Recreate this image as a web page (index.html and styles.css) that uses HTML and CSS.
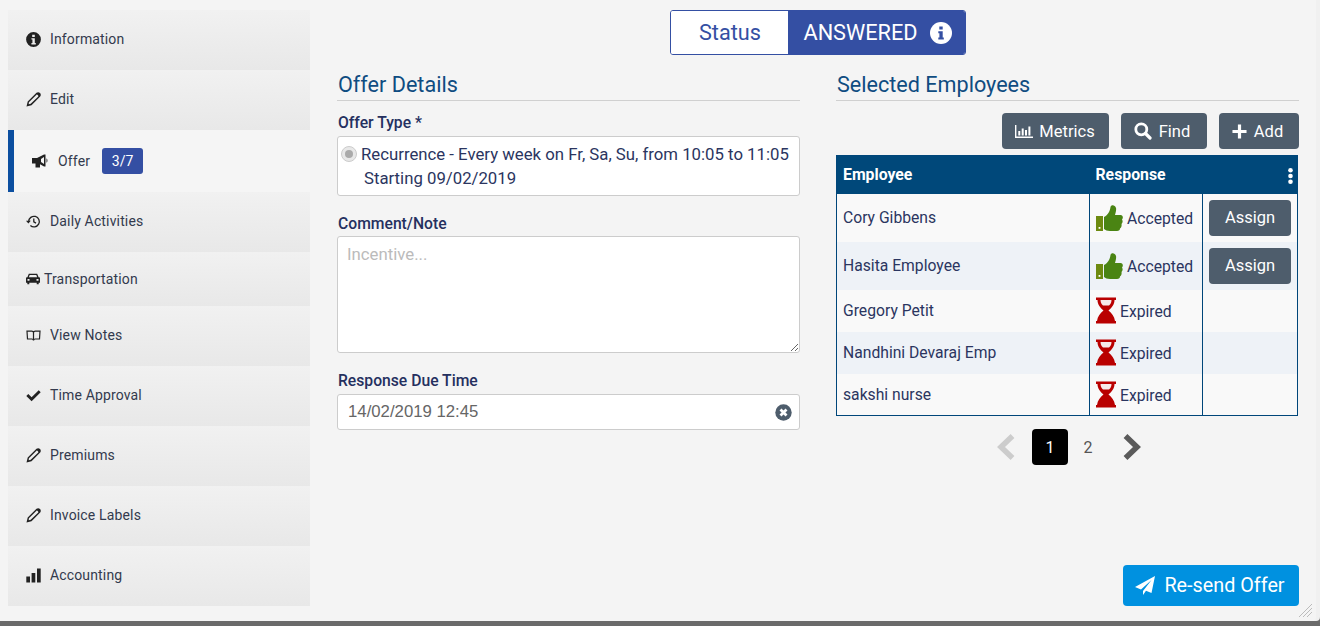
FILE: index.html
```html
<!DOCTYPE html>
<html lang="en">
<head>
<meta charset="utf-8">
<title>Offer</title>
<link rel="stylesheet" href="styles.css">
</head>
<body>
<div class="dialog">
  <svg width="0" height="0" class="defs">
    <defs>
      <symbol id="pencil" viewBox="0 0 15 15"><path fill-rule="evenodd" d="M10.500.8C11.500 0 13 0 14 1 15 2 15 3.500 14.200 4.500L5.500 13.300.5 14.500 1.700 9.500ZM10.500 2.700 2.900 10.300 2.700 12.200 4.700 11.800 12.300 4.400C12.700 3.800 11.200 2.200 10.500 2.700Z"/></symbol>
      <symbol id="thumb" viewBox="0 0 27 26"><rect x="0" y="11" width="7" height="15" fill="#6d8a10"/><rect x="2.600" y="22" width="1.800" height="1.800" fill="#fff"/><path d="M8 12C12 10 14 6 14.500 2 15-.5 19-.5 20 3 20.500 5 19.500 8 19 10H24.500C27 10 27.500 13 26 14.500 27 16 26.800 18 25.500 19 26 21 25 23 24 23.500 24 25 23 26 21 26H14C11 26 9.500 25 8 24Z" fill="#4a8413"/></symbol>
      <symbol id="hourglass" viewBox="0 0 20 26"><path d="M0 0H20V2.500H18.500C18.500 7 15.500 10.500 12.500 13 15.500 15.500 18.500 19 19 23.500H20V26H0V23.500H1C1.500 19 4.500 15.500 7.500 13 4.500 10.500 1.500 7 1.500 2.500H0Z" fill="#b90000"/><path d="M4.500 2.500H15.500C15.500 5 14.500 7 13 8H7C5.500 7 4.500 5 4.500 2.500Z" fill="#f6eaea"/></symbol>
    </defs>
  </svg>
  <nav class="side">
    <a class="item"><svg class="ic" viewBox="0 0 15 15"><path fill-rule="evenodd" d="M7.500.1a7.400 7.400 0 1 0 0 14.800 7.400 7.400 0 0 0 0-14.800ZM6.200 2.700h2.600v2.200H6.200ZM5.400 6.200h3.400v4.900h1v1.300H5.400v-1.300h1V7.500h-1Z"/></svg><span>Information</span></a>
    <a class="item"><svg class="ic"><use href="#pencil"/></svg><span>Edit</span></a>
    <a class="item active"><svg class="ic ic-mega" viewBox="0 0 16 14"><path fill-rule="evenodd" d="M0 4H5L12 .5H13.500V12.500H12L8 10.200V13.500H3.500V9.500H0ZM14.500 4.200C15.800 5 15.800 8 14.500 8.800Z M12 3 9 5V8L12 10Z"/></svg><span>Offer</span><b class="badge">3/7</b></a>
    <a class="item"><svg class="ic" viewBox="0 0 15 15"><path fill="none" stroke="#222" stroke-width="1.300" d="M2.700 7.500a5.300 5.300 0 1 1 1.700 4M7.800 4.500v3.300l2.200 1.300"/><path d="M0 6.800 4.800 6.800 2.400 9.500Z"/></svg><span>Daily Activities</span></a>
    <a class="item shorter"><svg class="ic ic-car" viewBox="0 0 14 12"><path fill-rule="evenodd" d="M2.800.7H11.200L12.600 4.300H13.500L14 5V9.800H12.700V11.300H10.700V9.800H3.300V11.300H1.300V9.800H0V5L.5 4.300H1.400ZM3.700 2 2.900 4.300H11.100L10.300 2ZM1.500 6V7.800H3.500V6ZM10.500 6V7.800H12.500V6Z"/></svg><span>Transportation</span></a>
    <a class="item"><svg class="ic" viewBox="0 0 15 15"><path fill="none" stroke="#222" stroke-width="1.200" d="M1 3.200H5.700C6.800 3.200 7.500 3.900 7.500 4.800V12.500C7.500 11.600 6.800 11 5.700 11H1.500ZM14 3.200H9.300C8.200 3.200 7.500 3.900 7.500 4.800V12.500C7.500 11.600 8.200 11 9.300 11H13.500Z"/></svg><span>View Notes</span></a>
    <a class="item"><svg class="ic" viewBox="0 0 15 15"><path d="M.3 8 2.300 6 5.600 9.300 12.700 2.300 14.700 4.300 5.600 13.300Z"/></svg><span>Time Approval</span></a>
    <a class="item"><svg class="ic"><use href="#pencil"/></svg><span>Premiums</span></a>
    <a class="item"><svg class="ic"><use href="#pencil"/></svg><span>Invoice Labels</span></a>
    <a class="item"><svg class="ic" viewBox="0 0 15 15"><path d="M.3 8.500H4V14.500H.3ZM5.600 5H9.300V14.500H5.600ZM11 .5H14.700V14.500H11Z"/></svg><span>Accounting</span></a>
  </nav>
  <main class="content">
    <div class="status-row">
      <div class="status">
        <span class="status-l">Status</span>
        <span class="status-r">ANSWERED<svg class="status-i" viewBox="0 0 22 22"><circle cx="11" cy="11" r="11" fill="#fff"/><path fill="#344fa3" d="M9.300 4.500H12.700V7.500H9.300ZM8.300 9.300H12.700V15.500H13.800V17.500H8.300V15.500H9.400V11.300H8.300Z"/></svg></span>
      </div>
    </div>
    <div class="cols">
      <section class="col-left">
        <h2 class="title">Offer Details</h2>
        <label class="lbl lbl-first">Offer Type *</label>
        <div class="box radio-box">
          <div class="radio-line"><span class="radio"><i></i></span>Recurrence - Every week on Fr, Sa, Su, from 10:05 to 11:05</div>
          <div class="start">Starting 09/02/2019</div>
        </div>
        <label class="lbl lbl-c">Comment/Note</label>
        <textarea class="box area" placeholder="Incentive..."></textarea>
        <label class="lbl lbl-r">Response Due Time</label>
        <div class="box due"><span>14/02/2019 12:45</span><svg class="clear" viewBox="0 0 17 17"><circle cx="8.500" cy="8.500" r="8.200" fill="#4e5d6c"/><path stroke="#fff" stroke-width="2.800" d="M5.500 5.500 11.500 11.500M11.500 5.500 5.500 11.500"/></svg></div>
      </section>
      <section class="col-right">
        <h2 class="title">Selected Employees</h2>
        <div class="tools">
          <button class="btn btn-metrics"><svg class="b-ic" viewBox="0 0 18 15"><path fill="#fff" d="M0 1H1.400V12.600H18V14H0ZM3.300 7H5.300V11.500H3.300ZM6.700 4.500H8.700V11.500H6.700ZM10 6H12V11.500H10ZM13.400 2.500H15.400V11.500H13.400Z"/></svg>Metrics</button>
          <button class="btn btn-find"><svg class="b-ic s" viewBox="0 0 18 18"><circle cx="7.300" cy="7.300" r="5.500" fill="none" stroke="#fff" stroke-width="2.800"/><path stroke="#fff" stroke-width="3.200" stroke-linecap="round" d="M11.500 11.500 16 16"/></svg>Find</button>
          <button class="btn btn-add"><svg class="b-ic p" viewBox="0 0 16 16"><path stroke="#fff" stroke-width="3.400" d="M8 .5V15.500M.5 8H15.500"/></svg>Add</button>
        </div>
        <table class="grid">
          <thead>
            <tr><th class="c1">Employee</th><th class="c2">Response</th><th class="c3"><svg class="dots" viewBox="0 0 7 16"><circle cx="3.500" cy="2.300" r="2.300"/><circle cx="3.500" cy="8" r="2.300"/><circle cx="3.500" cy="13.700" r="2.300"/></svg></th></tr>
          </thead>
          <tbody>
            <tr class="tall"><td>Cory Gibbens</td><td><div class="resp"><svg class="thumb"><use href="#thumb"/></svg>Accepted</div></td><td class="act"><button class="btn assign">Assign</button></td></tr>
            <tr class="tall alt"><td>Hasita Employee</td><td><div class="resp"><svg class="thumb"><use href="#thumb"/></svg>Accepted</div></td><td class="act"><button class="btn assign">Assign</button></td></tr>
            <tr><td>Gregory Petit</td><td><div class="resp"><svg class="glass"><use href="#hourglass"/></svg>Expired</div></td><td></td></tr>
            <tr class="alt"><td>Nandhini Devaraj Emp</td><td><div class="resp"><svg class="glass"><use href="#hourglass"/></svg>Expired</div></td><td></td></tr>
            <tr><td>sakshi nurse</td><td><div class="resp"><svg class="glass"><use href="#hourglass"/></svg>Expired</div></td><td></td></tr>
          </tbody>
        </table>
        <div class="pager">
          <svg class="chev" viewBox="0 0 18 26"><path fill="none" stroke="#ccc" stroke-width="5.500" d="M15.500 2 4 13 15.500 24"/></svg>
          <span class="pg on">1</span>
          <span class="pg">2</span>
          <svg class="chev" viewBox="0 0 18 26"><path fill="none" stroke="#5a5a5a" stroke-width="5.500" d="M2.500 2 14 13 2.500 24"/></svg>
        </div>
      </section>
    </div>
    <div class="foot">
      <button class="send"><svg class="send-ic" viewBox="0 0 20 20"><path fill="#fff" d="M20 0 16.500 17 11 14.700 8 19V15L16.500 4 6 13.500 0 11Z"/></svg>Re-send Offer</button>
    </div>
  </main>
  <svg class="grip" viewBox="0 0 14 14"><path stroke="#bbb" stroke-width="1" d="M1 14 14 1M5 14 14 5M9 14 14 9"/></svg>
</div>
</body>
</html>
```

FILE: styles.css
```css
* { box-sizing: border-box; }
html, body { margin: 0; height: 100%; }
body {
  background: #6a6a6a;
  overflow: hidden;
  font-family: Roboto, "Liberation Sans", sans-serif;
  color: #2b2f52;
}
.defs { position: absolute; }
.dialog {
  position: relative;
  width: 1316px;
  height: 621px;
  background: #f4f4f4;
  display: flex;
  border-bottom-right-radius: 4px;
  box-shadow: 4px 0 0 #f0f0f0;
}
.side {
  width: 302px;
  margin: 10px 0 0 8px;
  flex: none;
  display: flex;
  flex-direction: column;
}
.item {
  height: 60px;
  display: flex;
  align-items: center;
  padding: 0 0 2px 18px;
  font-size: 14px;
  letter-spacing: .15px;
  color: #333a4d;
  background: linear-gradient(#f1f1f1, #e8e8e8);
}
.item > span { margin-left: 9px; }
.ic { width: 15px; height: 15px; flex: none; fill: #222; }
.item.shorter { height: 54px; padding-bottom: 0; }
.item.shorter > span { margin-left: 4px; }
.ic-car { width: 14px; height: 12px; }
.item.active {
  height: 62px;
  background: #f5f5f5;
  border-left: 6px solid #0c4fa0;
  padding-left: 18px;
  padding-bottom: 0;
}
.item.active > span { margin-left: 10px; }
.ic-mega { width: 16px; height: 14px; }
.badge {
  margin-left: 12px;
  width: 41px;
  height: 26px;
  border-radius: 3px;
  background: #344fa3;
  color: #fff;
  font-weight: 400;
  font-size: 14px;
  display: flex;
  align-items: center;
  justify-content: center;
}
.content {
  flex: 1;
  display: flex;
  flex-direction: column;
  padding: 10px 17px 15px 27px;
  min-width: 0;
}
.status-row { display: flex; justify-content: center; height: 45px; }
.status {
  display: flex;
  width: 296px;
  height: 45px;
  border: 1px solid #344fa3;
  border-radius: 3px;
  overflow: hidden;
  font-size: 21.700px;
  margin-left: -1px;
}
.status-l {
  width: 117px;
  background: #fff;
  color: #344fa3;
  display: flex;
  align-items: center;
  justify-content: center;
  padding-left: 2px;
}
.status-r {
  flex: 1;
  background: #344fa3;
  color: #fff;
  display: flex;
  align-items: center;
  padding-left: 16px;
}
.status-i { width: 22px; height: 22px; margin-left: 12px; }
.cols { display: flex; gap: 36px; flex: 1; margin-top: 16px; }
.col-left { width: 463px; display: flex; flex-direction: column; }
.col-right { width: 463px; display: flex; flex-direction: column; }
.title {
  margin: 0;
  height: 30px;
  font-size: 21.600px;
  line-height: 27px;
  font-weight: 400;
  color: #0f4c81;
  border-bottom: 1px solid #d0d0d0;
  padding-left: 1px;
}
.lbl { display: block; font-size: 15.700px; font-weight: 500; color: #25305f; line-height: 20px; padding-left: 1px; }
.lbl-first { margin-top: 12px; }
.lbl-c { margin-top: 18px; }
.lbl-r { margin-top: 18px; }
.box {
  display: block;
  width: 100%;
  background: #fff;
  border: 1px solid #ccc;
  border-radius: 3px;
}
.radio-box { margin-top: 3px; height: 60px; padding: 5px 0 0 3px; font-size: 16.750px; line-height: 24px; color: #2b3560; }
.radio-line { display: flex; align-items: center; white-space: nowrap; }
.radio {
  width: 16px;
  height: 16px;
  border-radius: 50%;
  background: #e8e8e8;
  border: 1px solid #ccc;
  display: flex;
  align-items: center;
  justify-content: center;
  margin-right: 4px;
  flex: none;
}
.radio i { width: 8px; height: 8px; border-radius: 50%; background: #aaa; }
.start { padding-left: 23px; }
.area {
  margin-top: 2px;
  height: 117px;
  padding: 6px 9px;
  resize: vertical;
  font: 16.750px/22px Roboto, sans-serif;
}
.area::placeholder { color: #bbb; opacity: 1; }
.due {
  margin-top: 3px;
  height: 36px;
  display: flex;
  align-items: center;
  justify-content: space-between;
  padding: 0 7px 1px 10px;
  font: 16.750px "Liberation Sans", sans-serif;
  color: #666;
}
.clear { width: 17px; height: 17px; margin-top: 1px; }
.tools { display: flex; justify-content: flex-end; gap: 12px; margin-top: 12px; height: 36px; }
.btn {
  display: inline-flex;
  align-items: center;
  justify-content: center;
  height: 36px;
  padding: 0;
  background: #4e5d6c;
  color: #fff;
  border: 0;
  border-radius: 4px;
  font: 16.500px Roboto, sans-serif;
}
.btn-metrics { width: 107px; padding-right: 1px; }
.btn-find { width: 86px; padding-right: 4px; }
.btn-add { width: 80px; padding-right: 3px; }
.b-ic { width: 18px; height: 15px; margin-right: 6px; }
.b-ic.s { width: 18px; height: 18px; margin-right: 7px; }
.b-ic.p { width: 15px; height: 15px; margin-right: 7px; }
.grid {
  margin-top: 6px;
  width: 462px;
  border-collapse: collapse;
  table-layout: fixed;
  font-size: 15.700px;
  background: #f9f9f9;
  border: 1px solid #00467a;
}
.grid th {
  background: #00487a;
  color: #fff;
  text-align: left;
  height: 38px;
  padding: 0 6px;
  font-size: 15.800px;
  font-weight: 700;
}
.c1 { width: 253px; }
.c2 { width: 113px; }
.grid .c3 { text-align: right; padding-right: 3px; }
.dots { width: 7px; height: 16px; fill: #fff; vertical-align: middle; }
.grid td { height: 42px; padding: 0 6px; color: #2b3560; vertical-align: middle; }
.grid td:nth-child(2), .grid td:nth-child(3) { border-left: 1px solid #00467a; }
.grid tr.tall td { height: 48px; }
.grid tr.alt td { background: #eef2f7; }
.resp { display: flex; align-items: center; padding-top: 2px; }
.resp svg { margin-top: -2px; }
.thumb { width: 27px; height: 26px; margin-right: 4px; flex: none; }
.glass { width: 20px; height: 27px; margin-right: 4px; flex: none; }
.grid td.act { padding: 0 7px 0 6px; }
.btn.assign { width: 82px; }
.pager { display: flex; justify-content: center; align-items: center; margin-top: 13px; height: 36px; padding-left: 3px; }
.chev { width: 18px; height: 26px; }
.pg { width: 36px; height: 36px; border-radius: 4px; display: flex; align-items: center; justify-content: center; font-size: 16px; color: #555; }
.pg.on { background: #000; color: #fff; margin-left: 17px; margin-right: 2px; }
.pg + .chev { margin-left: 17px; }
.foot { display: flex; justify-content: flex-end; margin-top: auto; }
.send {
  display: flex;
  align-items: center;
  justify-content: center;
  width: 176px;
  height: 41px;
  padding: 0 2px 0 0;
  background: #0091e0;
  color: #fff;
  border: 0;
  border-radius: 4px;
  font: 19.800px Roboto, sans-serif;
}
.send-ic { width: 20px; height: 20px; margin-right: 9px; }
.grip { position: absolute; right: 4px; bottom: 4px; width: 14px; height: 14px; }
```
